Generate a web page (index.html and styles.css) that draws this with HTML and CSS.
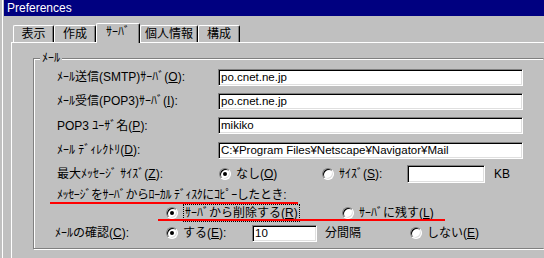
FILE: index.html
```html
<!DOCTYPE html>
<html lang="ja">

<head>
    <meta charset="UTF-8" />
    <title>Preferences</title>
    <link rel="stylesheet" href="styles.css">
</head>

<body>
    <div class="window">
        <div class="titlebar">Preferences</div>

        <div class="client">
            <div class="tabs">
                <div class="tab tab-1">表示</div>
                <div class="tab tab-2">作成</div>
                <div class="tab tab-sel">ｻｰﾊﾞ</div>
                <div class="tab tab-4">個人情報</div>
                <div class="tab tab-5">構成</div>
            </div>

            <div class="panel">
                <div class="group">
                    <span class="legend">ﾒｰﾙ</span>

                    <div class="row">
                        <span class="lbl">ﾒｰﾙ送信<span class="key">(SMTP)</span>ｻｰﾊﾞ<span class="key">(<u>O</u>):</span></span>
                        <div class="field wide">po.cnet.ne.jp</div>
                    </div>
                    <div class="row">
                        <span class="lbl">ﾒｰﾙ受信<span class="key">(POP3)</span>ｻｰﾊﾞ<span class="key">(<u>I</u>):</span></span>
                        <div class="field wide">po.cnet.ne.jp</div>
                    </div>
                    <div class="row row-tall">
                        <span class="lbl">POP3 ﾕｰｻﾞ名<span class="key">(<u>P</u>):</span></span>
                        <div class="field wide">mikiko</div>
                    </div>
                    <div class="row">
                        <span class="lbl">ﾒｰﾙ ﾃﾞｨﾚｸﾄﾘ<span class="key">(<u>D</u>):</span></span>
                        <div class="field wide">C:¥Program Files¥Netscape¥Navigator¥Mail</div>
                    </div>

                    <div class="row">
                        <span class="lbl lbl-size">最大ﾒｯｾｰｼﾞ ｻｲｽﾞ<span class="key">(<u>Z</u>):</span></span>
                        <div class="opt opt-none"><span class="radio on"></span><span>なし<span class="key">(<u>O</u>)</span></span></div>
                        <div class="opt opt-size"><span class="radio"></span><span>ｻｲｽﾞ<span class="key">(<u>S</u>):</span></span></div>
                        <div class="field small"></div>
                        <span class="unit">KB</span>
                    </div>

                    <div class="row row-note">
                        <span class="note">ﾒｯｾｰｼﾞをｻｰﾊﾞからﾛｰｶﾙ ﾃﾞｨｽｸにｺﾋﾟｰしたとき<span class="key">:</span></span>
                    </div>
                    <div class="row row-copy">
                        <div class="opt opt-delete"><span class="radio on"></span><span class="focus">ｻｰﾊﾞから削除する<span class="key">(<u>R</u>)</span></span></div>
                        <div class="opt"><span class="radio"></span><span>ｻｰﾊﾞに残す<span class="key">(<u>L</u>)</span></span></div>
                    </div>

                    <div class="row">
                        <span class="lbl lbl-check">ﾒｰﾙの確認<span class="key">(<u>C</u>):</span></span>
                        <div class="opt opt-yes"><span class="radio on"></span><span>する<span class="key">(<u>E</u>):</span></span></div>
                        <div class="field minutes">10</div>
                        <span class="every">分間隔</span>
                        <div class="opt"><span class="radio"></span><span>しない<span class="key">(<u>E</u>)</span></span></div>
                    </div>
                </div>
            </div>
        </div>
    </div>

    <!-- 赤線の注記 -->
    <div class="mark mark-1"></div>
    <div class="mark mark-2"></div>
</body>

</html>
```

FILE: styles.css
```css
body {
    margin: 0;
    width: 544px;
    height: 258px;
    overflow: hidden;
    position: relative;
    background-color: #c0c0c0;
    color: #000;
    font-family: "Liberation Sans", "Noto Sans CJK JP", sans-serif;
    font-size: 12px;
    line-height: 14px;
}

/* ショートカット部分は英字フォントだけで */
.key {
    font-family: "Liberation Sans", sans-serif;
}

.window {
    margin-left: 2px;
    border-left: 1px solid #fff;
    height: 258px;
}

.titlebar {
    margin-left: 1px;
    height: 16px;
    line-height: 16px;
    padding-left: 3px;
    background-color: #000080;
    color: #fff;
}

.client {
    padding: 7px 0 0 8px;
}

/* タブ */
.tabs {
    display: flex;
    align-items: flex-end;
    height: 19px;
    margin-left: 2px;
}

.tab {
    box-sizing: border-box;
    height: 17px;
    display: flex;
    align-items: center;
    justify-content: center;
    border-top: 1px solid #fff;
    border-left: 1px solid #fff;
    border-right: 1px solid #000;
    border-radius: 2px 2px 0 0;
    box-shadow: inset -1px 0 #808080;
}

.tab-1 { width: 41px; }
.tab-2 { width: 42px; }
.tab-4 { width: 58px; }
.tab-5 { width: 42px; }

.tab-sel {
    width: 44px;
    height: 20px;
    margin-bottom: -1px;
    padding-bottom: 3px;
    position: relative;
    z-index: 1;
    background-color: #c0c0c0;
}

.panel {
    border-top: 1px solid #fff;
    border-left: 1px solid #fff;
    height: 215px;
}

/* グループ枠 (右端は画面外) */
.group {
    position: relative;
    box-sizing: border-box;
    width: 511px;
    height: 191px;
    margin: 15px 0 0 21px;
    padding: 6px 0 0 23px;
    border: 1px solid #808080;
    border-right-color: #c0c0c0;
    box-shadow: 1px 1px 0 #fff, inset 1px 1px 0 #fff;
}

.legend {
    position: absolute;
    top: -8px;
    left: 6px;
    padding: 0 2px;
    background-color: #c0c0c0;
}

.row {
    display: flex;
    align-items: center;
    height: 24px;
    white-space: nowrap;
}

.row-tall { height: 25px; }
.row-note { height: 18px; }
.row-copy { height: 17px; padding-left: 109px; }

.note { letter-spacing: -0.4px; }

.lbl { width: 161px; flex: none; }
.lbl-size { width: 162px; }
.lbl-check { width: 111px; margin-left: -2px; }

.field {
    box-sizing: border-box;
    height: 17px;
    line-height: 15px;
    padding-left: 2px;
    font-size: 11.5px;
    background-color: #fff;
    border: 1px solid;
    border-color: #808080 #fff #fff #808080;
    box-shadow: inset 1px 1px #000, inset -1px -1px #dfdfdf;
    flex: none;
}

.wide { width: 305px; }
.small { width: 78px; height: 18px; }
.minutes { width: 65px; }

.unit { margin-left: 9px; }
.every { width: 85px; margin-left: 8px; flex: none; }

/* ラジオボタン */
.opt {
    display: flex;
    align-items: center;
    gap: 5px;
    flex: none;
}

.opt-none { width: 103px; }
.opt-size { width: 85px; }
.opt-delete { width: 176px; }
.opt-yes { width: 86px; }

.radio {
    position: relative;
    box-sizing: border-box;
    width: 12px;
    height: 12px;
    border-radius: 50%;
    border: 1px solid;
    border-color: #808080 #fff #fff #808080;
    background-color: #fff;
    box-shadow: inset 1px 1px #000, inset -1px -1px #dfdfdf;
    flex: none;
}

.radio.on::after {
    content: "";
    position: absolute;
    left: 3px;
    top: 3px;
    width: 4px;
    height: 4px;
    border-radius: 50%;
    background-color: #000;
}

.focus {
    box-sizing: border-box;
    height: 18px;
    line-height: 16px;
    padding: 0 1px;
    border: 1px dotted #000;
}

/* 注記の赤線 */
.mark {
    position: absolute;
    height: 2px;
    background-color: #f00;
}

.mark-1 { left: 50px; top: 202px; width: 248px; }
.mark-2 { left: 158px; top: 219px; width: 287px; }
```
